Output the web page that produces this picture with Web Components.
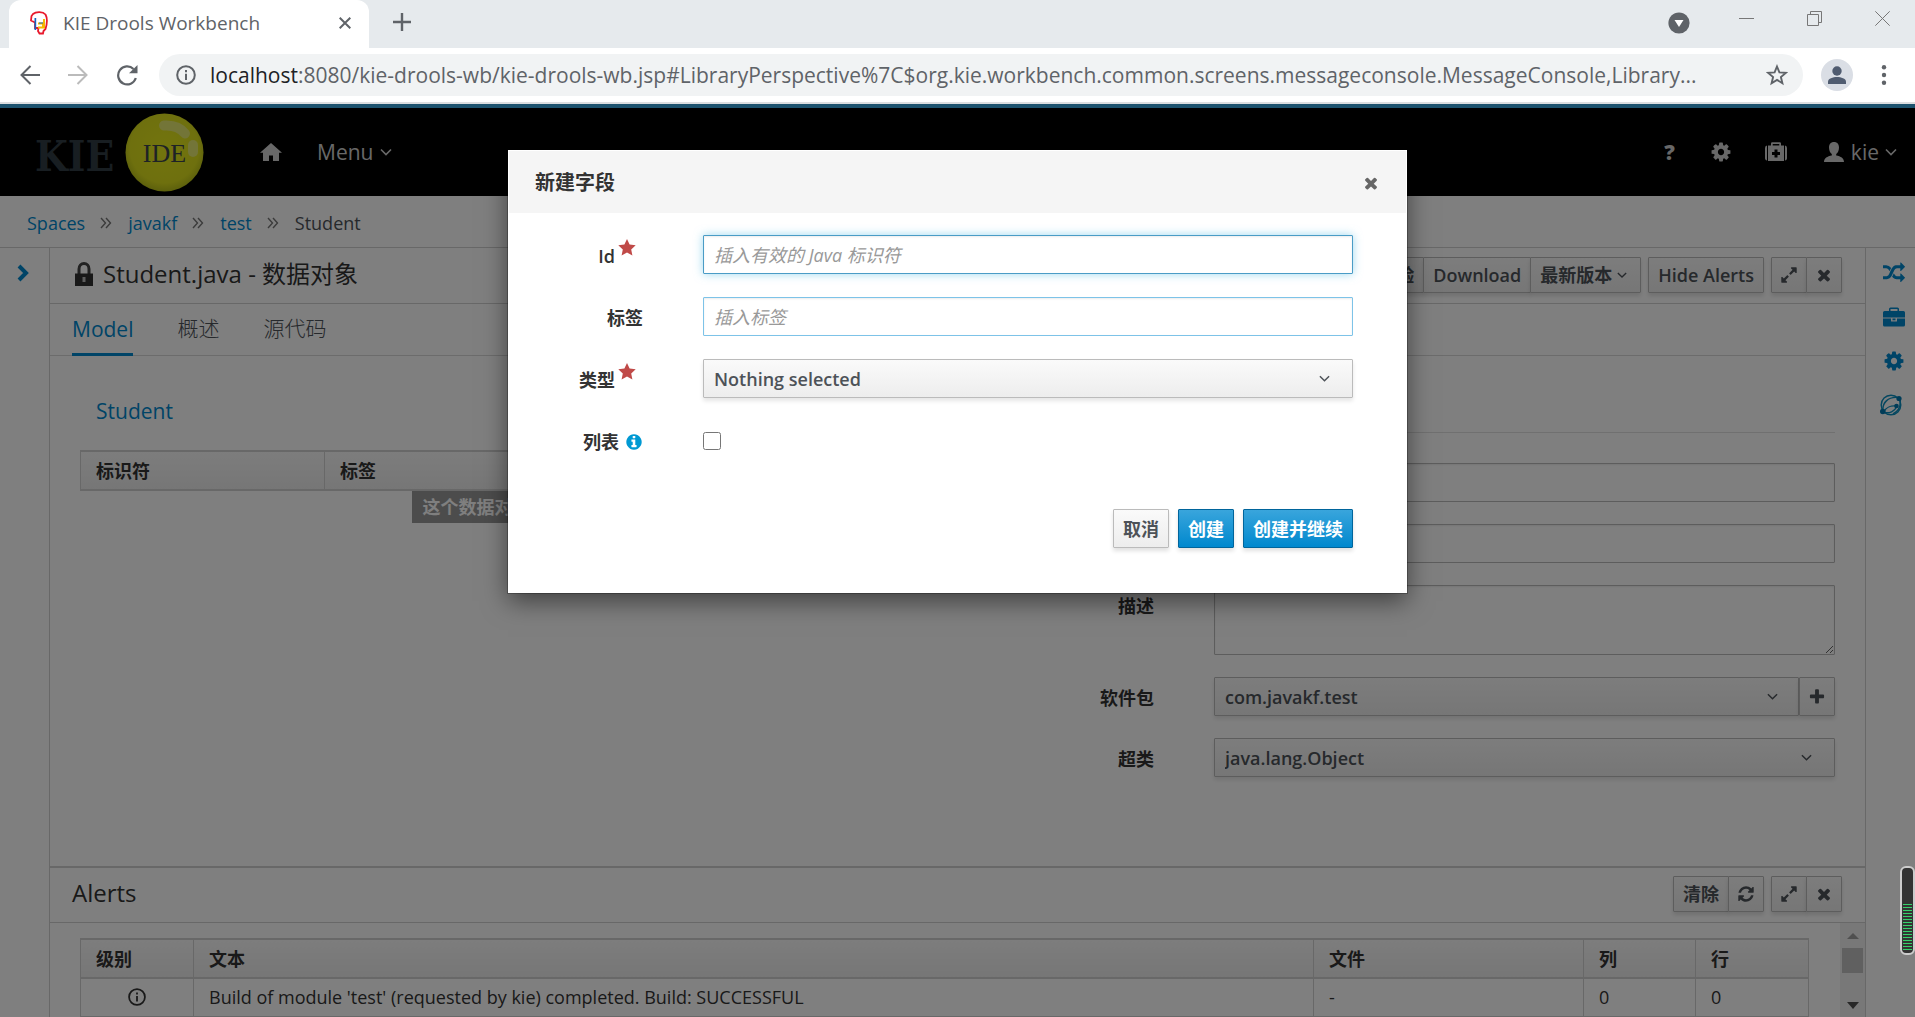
<!DOCTYPE html>
<html lang="zh-CN">
<head>
<meta charset="utf-8">
<title>KIE Drools Workbench</title>
<style>
  html, body { margin: 0; height: 100%; }
  body {
    font-family: "Open Sans", "Noto Sans CJK SC", sans-serif;
    font-size: 18px; line-height: 24px; color: #333; background: #fff; overflow: hidden;
  }
</style>
</head>
<body>
<work-bench></work-bench>

<script>
const BASE = `
  *, *::before, *::after { box-sizing: border-box; }
  [hidden] { display: none; }
  a { color: #0088ce; text-decoration: none; }
  button, input, select, textarea { font: inherit; color: inherit; margin: 0; }
`;

function define(name, render) {
  customElements.define(name, class extends HTMLElement {
    constructor() { super(); this.attachShadow({ mode: 'open' }); }
    connectedCallback() {
      if (this.shadowRoot.childNodes.length) return;
      const t = document.createElement('template');
      t.innerHTML = `<style>${BASE}</style>` + render(this);
      this.shadowRoot.append(t.content.cloneNode(true));
    }
  });
}

const FA = d => ['0 0 1792 1792', `<path fill="currentColor" d="${d}"/>`];
const ICONS = {
  cog: FA('M1152 896q0-106-75-181t-181-75-181 75-75 181 75 181 181 75 181-75 75-181zm512-109v222q0 12-8 23t-20 13l-185 28q-19 54-39 91 35 50 107 138 10 12 10 25t-9 23q-27 37-99 108t-94 71q-12 0-26-9l-138-108q-44 23-91 38-16 136-29 186-7 28-36 28h-222q-14 0-24.5-8.5t-11.5-21.5l-28-184q-49-16-90-37l-141 107q-10 9-25 9-14 0-25-11-126-114-165-168-7-10-7-23 0-12 8-23 15-21 51-66.5t54-70.5q-27-50-41-99l-183-27q-13-2-21-12.5t-8-23.5v-222q0-12 8-23t19-13l186-28q14-46 39-92-40-57-107-138-10-12-10-24 0-10 9-23 26-36 98.5-107.5t94.5-71.5q13 0 26 10l138 107q44-23 91-38 16-136 29-186 7-28 36-28h222q14 0 24.5 8.5t11.5 21.5l28 184q49 16 90 37l142-107q9-9 24-9 13 0 25 10 129 119 165 170 7 8 7 22 0 12-8 23-15 21-51 66.5t-54 70.5q26 50 41 98l183 28q13 2 21 12.5t8 23.5z'),
  times: FA('M1490 1322q0 40-28 68l-136 136q-28 28-68 28t-68-28l-294-294-294 294q-28 28-68 28t-68-28l-136-136q-28-28-28-68t28-68l294-294-294-294q-28-28-28-68t28-68l136-136q28-28 68-28t68 28l294 294 294-294q28-28 68-28t68 28l136 136q28 28 28 68t-28 68l-294 294 294 294q28 28 28 68z'),
  plus: FA('M1600 736v192q0 40-28 68t-68 28h-416v416q0 40-28 68t-68 28h-192q-40 0-68-28t-28-68v-416h-416q-40 0-68-28t-28-68v-192q0-40 28-68t68-28h416v-416q0-40 28-68t68-28h192q40 0 68 28t28 68v416h416q40 0 68 28t28 68z'),
  info: FA('M1152 1376v-160q0-14-9-23t-23-9h-96v-512q0-14-9-23t-23-9h-320q-14 0-23 9t-9 23v160q0 14 9 23t23 9h96v320h-96q-14 0-23 9t-9 23v160q0 14 9 23t23 9h448q14 0 23-9t9-23zm-128-896v-160q0-14-9-23t-23-9h-192q-14 0-23 9t-9 23v160q0 14 9 23t23 9h192q14 0 23-9t9-23zm640 416q0 209-103 385.5t-279.5 279.5-385.5 103-385.5-103-279.5-279.5-103-385.5 103-385.5 279.5-279.5 385.5-103 385.5 103 279.5 279.5 103 385.5z'),
  refresh: FA('M1639 1056q0 5-1 7-64 268-268 434.5t-478 166.5q-146 0-282.5-55t-243.5-157l-129 129q-19 19-45 19t-45-19-19-45v-448q0-26 19-45t45-19h448q26 0 45 19t19 45-19 45l-137 137q71 66 161 102t187 36q134 0 250-65t186-179q11-17 53-117 8-23 30-23h192q13 0 22.5 9.5t9.5 22.5zm25-800v448q0 26-19 45t-45 19h-448q-26 0-45-19t-19-45 19-45l138-138q-148-137-349-137-134 0-250 65t-186 179q-11 17-53 117-8 23-30 23h-199q-13 0-22.5-9.5t-9.5-22.5v-7q65-268 270-434.5t480-166.5q146 0 284 55.5t245 156.5l130-129q19-19 45-19t45 19 19 45z'),
  random: FA('M666 481q-60 92-137 273-22-45-37-72.5t-40.5-63.5-51-56.5-63-35-81.5-14.5h-224q-14 0-23-9t-9-23v-192q0-14 9-23t23-9h224q250 0 410 225zm1126 799q0 14-9 23l-320 320q-9 9-23 9-13 0-22.5-9.5t-9.5-22.5v-192q-32 0-85 .5t-81 1-73-1-71-5-64-10.5-63-18.5-58-28.5-59-40-55-53.5-56-69.5q59-93 136-273 22 45 37 72.5t40.5 63.5 51 56.5 63 35 81.5 14.5h256v-192q0-14 9-23t23-9q12 0 24 10l319 319q9 9 9 23zm0-896q0 14-9 23l-320 320q-9 9-23 9-13 0-22.5-9.5t-9.5-22.5v-192h-256q-48 0-87 15t-69 45-51 61.5-45 77.5q-32 62-78 171-29 66-49.5 111t-54 105-64 100-74 83-90 68.5-106.5 42-128 16.5h-224q-14 0-23-9t-9-23v-192q0-14 9-23t23-9h224q48 0 87-15t69-45 51-61.5 45-77.5q32-62 78-171 29-66 49.5-111t54-105 64-100 74-83 90-68.5 106.5-42 128-16.5h256v-192q0-14 9-23t23-9q12 0 24 10l319 319q9 9 9 23z'),
  expand: FA('M883 1056q0 13-10 23l-332 332 144 144q19 19 19 45t-19 45-45 19h-448q-26 0-45-19t-19-45v-448q0-26 19-45t45-19 45 19l144 144 332-332q10-10 23-10t23 10l114 114q10 10 10 23zm781-864v448q0 26-19 45t-45 19-45-19l-144-144-332 332q-10 10-23 10t-23-10l-114-114q-10-10-10-23t10-23l332-332-144-144q-19-19-19-45t19-45 45-19h448q26 0 45 19t19 45z'),
  briefcase: ['0 0 22 20', `<path fill="currentColor" fill-rule="evenodd" d="M6 4V2a1.500 1.500 0 0 1 1.500-1.500h7A1.500 1.500 0 0 1 16 2v2h4.500A1.500 1.500 0 0 1 22 5.500V10.500H0V5.500A1.500 1.500 0 0 1 1.500 4zM7.500 4h7V2h-7zM0 11.500h8V14a.6.6 0 0 0 .6.6h4.800A.6.6 0 0 0 14 14v-2.500h8v6.500a1.500 1.500 0 0 1-1.500 1.500h-19A1.500 1.500 0 0 1 0 18zM9.500 11.500h3v1.700h-3z"/>`],
  medkit: ['0 0 22 20', `<path fill="currentColor" fill-rule="evenodd" d="M0 6a2.500 2.500 0 0 1 2-2.400v15A2.500 2.500 0 0 1 0 16.500zM3 3.500H6V1.500A1.300 1.300 0 0 1 7.300.2h7.400A1.300 1.300 0 0 1 16 1.500v2h3v15.500H3zM7.700 3.500h6.600V1.900H7.700zM9.500 7.500V10H7v3h2.500v2.500h3V13H15v-3h-2.500V7.500zM20 3.600A2.500 2.500 0 0 1 22 6v10.500a2.500 2.500 0 0 1-2 2.100z"/>`],
  globe: ['0 0 22 22', `<g fill="none" stroke="#0a8fc0" stroke-width="1.400"><circle cx="11" cy="11" r="9.800"/><path d="M3 17C2 9 8 2.500 18 3.500M4 17.500c2-4 7-6 12-5.500M4.500 18.500c5 1 10-1 12-5.500M20 5c1 6-1 12-7 15"/></g><g fill="#0078b0"><circle cx="19" cy="4.500" r="2.600"/><circle cx="2.800" cy="17.500" r="2.800"/><circle cx="16.500" cy="12" r="2.300"/></g>`],
  home: ['0 0 22 18', `<path fill="currentColor" d="M11 0 22 9.800H19V18H13V12.500H9V18H3V9.800H0z"/>`],
  user: ['0 0 20 20', `<path fill="currentColor" d="M10 0c3.200 0 5 2.200 5 5.500 0 2.900-1.200 5.400-2.800 6.600v1.400c4.500.8 7.800 2.700 7.800 6.500H0c0-3.800 3.300-5.700 7.800-6.500v-1.400C6.200 10.900 5 8.400 5 5.500 5 2.200 6.800 0 10 0z"/>`],
  down: ['0 0 12 12', `<path fill="none" stroke="currentColor" stroke-width="1.600" d="M1 3.500 6 8.500 11 3.500"/>`],
  right: ['0 0 12 18', `<path fill="none" stroke="currentColor" stroke-width="4" d="M2 2 9 9 2 16"/>`],
  dbl: ['0 0 12 12', `<path fill="none" stroke="currentColor" stroke-width="1.400" d="M1 1 5.500 6 1 11M6 1 10.500 6 6 11"/>`],
  star: ['0 0 18 17', `<path fill="currentColor" d="M9 0 11.600 5.600 17.700 6.300 13.200 10.400 14.400 16.500 9 13.500 3.600 16.500 4.800 10.400.3 6.300 6.400 5.600z"/>`],
  lock: ['0 0 18 24', `<path fill="none" stroke="#444" stroke-width="3" d="M4 12V7a5 5.500 0 0 1 10 0v5"/><path fill="#333" d="M0 11.500h18V24H0z"/><path fill="#bbb" d="M7.500 15h3v5h-3z"/>`],
  circleinfo: ['0 0 20 20', `<circle cx="10" cy="10" r="8.800" fill="none" stroke="currentColor" stroke-width="2"/><path fill="currentColor" d="M9 5h2v2.200H9zM9 8.800h2V15H9z"/>`],
  favicon: ['0 0 18 24', `<path fill="#fff" stroke="#e8192c" stroke-width="1.800" d="M3 3C6 .5 13 .5 15.500 3.500 18 8 17 13 15.500 18L13.500 20 13 22.500H9.500L8 20 8.500 17H5V11.500L1 9.500 1.500 5z"/><path fill="#1565c0" d="M4.500 7h1.700v12H4.500z"/><path fill="#f5b800" d="M8 11.500h5V8h2v9.500H8v-2h4v-2H8z"/><path fill="#1565c0" d="M9 11.500h4v1H9z"/>`],
  tabclose: ['0 0 12 12', `<path stroke="currentColor" stroke-width="2" d="M.7.7 11.300 11.300M11.300.7.7 11.300"/>`],
  newtab: ['0 0 18 18', `<path stroke="currentColor" stroke-width="2.400" d="M9 0V18M0 9H18"/>`],
  back: ['0 0 20 20', `<path fill="none" stroke="currentColor" stroke-width="2" d="M20 10H2M10.500 1 1.500 10 10.500 19"/>`],
  forward: ['0 0 20 20', `<path fill="none" stroke="currentColor" stroke-width="2" d="M0 10H18M9.500 1 18.500 10 9.500 19"/>`],
  reload: ['0 0 22 22', `<path fill="none" stroke="currentColor" stroke-width="2.200" d="M19.800 14A9 9 0 1 1 17.500 5"/><path fill="currentColor" d="M21.500 1V9.300H13z"/>`],
  bookmark: ['0 0 22 22', `<path fill="none" stroke="currentColor" stroke-width="1.900" stroke-linejoin="miter" d="M11 2.500 13.400 8.400 19.800 8.900 14.900 13 16.400 19.200 11 15.900 5.600 19.200 7.100 13 2.200 8.900 8.600 8.400z"/>`],
  avatar: ['0 0 32 32', `<circle cx="16" cy="16" r="16" fill="#dadee5"/><circle cx="16" cy="12" r="4.700" fill="#505c70"/><path fill="#505c70" d="M7 25v-2.500C7 19.500 12 18 16 18s9 1.500 9 4.500V25z"/>`],
  dots: ['0 0 6 20', `<g fill="currentColor"><circle cx="3" cy="2.300" r="2.200"/><circle cx="3" cy="10" r="2.200"/><circle cx="3" cy="17.700" r="2.200"/></g>`],
  media: ['0 0 22 22', `<circle cx="11" cy="11" r="10.600" fill="#5f6368"/><path fill="#fff" d="M6.500 8h9L11 15z"/>`],
  min: ['0 0 15 15', `<path stroke="#777" stroke-width="1" d="M0 7.500H15"/>`],
  restore: ['0 0 15 15', `<path fill="none" stroke="#777" stroke-width="1" d="M.5 3.500h11v11H.5zM3.500 3.500V.5h11v11h-3"/>`],
  close: ['0 0 15 15', `<path stroke="#777" stroke-width="1" d="M.3.3 14.700 14.700M14.700.3.3 14.700"/>`],
};

define('wb-icon', el => {
  const [box, body] = ICONS[el.getAttribute('name')];
  const [, , w, h] = box.split(' ').map(Number);
  const width = Number(el.getAttribute('size')) || w;
  return `<style>:host { display: inline-flex; flex: none; } svg { display: block; }</style>
    <svg width="${width}" height="${Math.round(width * h / w)}" viewBox="${box}" aria-hidden="true">${body}</svg>`;
});

define('browser-chrome', () => `
  <style>
    :host { display: block; color: #5f6368; font-family: "Open Sans", sans-serif; }
    button { border: 0; background: none; padding: 0; display: inline-flex; }
    .strip { display: flex; align-items: center; height: 48px; background: #e6eaed; padding-left: 9px; }
    .tab { display: flex; align-items: center; width: 360px; height: 48px; padding: 0 18px 2px 21px; gap: 15px;
      background: #fff; border-radius: 12px 12px 0 0; }
    .tab .title { flex: 1; font-size: 19px; }
    .strip > .new { margin: 0 auto 4px 24px; }
    .win { display: flex; align-items: flex-start; gap: 53px; padding-right: 25px; padding-bottom: 11px; }
    .media { margin: 0 49px 3px 0; }
    .bar { display: flex; align-items: center; height: 54px; background: #fff; padding: 0 28px 0 20px; }
    .nav { display: flex; align-items: center; gap: 28px; margin-right: 21px; }
    .fwd { color: #bbb; }
    .omni { flex: 1; min-width: 0; display: flex; align-items: center; height: 42px; border-radius: 21px;
      background: #f1f3f4; padding: 0 15px 0 17px; }
    .url { flex: 1; min-width: 0; margin: 0 32px 0 14px; font-size: 21px; line-height: 28px; white-space: nowrap; overflow: hidden; }
    .url b { font-weight: 400; color: #202124; }
    .me { margin: 0 28px 0 18px; }
    .edge { height: 2px; background: #dcdee0; }
  </style>
  <div class="strip">
    <div class="tab"><wb-icon name="favicon"></wb-icon><span class="title">KIE Drools Workbench</span>
      <button aria-label="Close tab"><wb-icon name="tabclose"></wb-icon></button></div>
    <button class="new" aria-label="New tab"><wb-icon name="newtab"></wb-icon></button>
    <button class="media" aria-label="Media"><wb-icon name="media"></wb-icon></button>
    <div class="win">
      <button aria-label="Minimize"><wb-icon name="min"></wb-icon></button>
      <button aria-label="Restore"><wb-icon name="restore"></wb-icon></button>
      <button aria-label="Close"><wb-icon name="close"></wb-icon></button>
    </div>
  </div>
  <div class="bar">
    <div class="nav">
      <button aria-label="Back"><wb-icon name="back"></wb-icon></button>
      <button class="fwd" aria-label="Forward"><wb-icon name="forward"></wb-icon></button>
      <button aria-label="Reload"><wb-icon name="reload"></wb-icon></button>
    </div>
    <div class="omni">
      <wb-icon name="circleinfo"></wb-icon>
      <div class="url" role="textbox" aria-label="Address"><b>localhost</b>:8080/kie-drools-wb/kie-drools-wb.jsp#LibraryPerspective%7C$org.kie.workbench.common.screens.messageconsole.MessageConsole,Library...</div>
      <button aria-label="Bookmark"><wb-icon name="bookmark"></wb-icon></button>
    </div>
    <button class="me" aria-label="Profile"><wb-icon name="avatar"></wb-icon></button>
    <button aria-label="Menu"><wb-icon name="dots"></wb-icon></button>
  </div>
  <div class="edge"></div>`);

define('app-header', () => `
  <style>
    :host { display: flex; align-items: center; height: 92px; border-top: 4px solid #39a5dc; background: #000;
      padding: 0 18px 0 34px; color: #d1d1d1; font-size: 21px; line-height: 28px; }
    svg.logo { display: block; flex: none; margin-right: 55px; }
    a, button { display: inline-flex; align-items: center; gap: 6px; color: inherit; background: none; border: 0; padding: 0; }
    .menu { margin: 0 auto 0 35px; gap: 7px; }
    .tools { display: flex; align-items: center; }
    .q { font-weight: 800; margin-right: 35px; }
    .gear { margin-right: 33px; }
    .kit { margin-right: 37px; }
    .user wb-icon:first-child { margin-right: 1px; }
  </style>
  <svg class="logo" width="171" height="84" viewBox="0 0 171 84">
    <defs><radialGradient id="ball" cx=".5" cy=".45" r=".55"><stop offset="0" stop-color="#e6ea1c"/><stop offset=".8" stop-color="#dde01c"/><stop offset="1" stop-color="#b9c01a"/></radialGradient></defs>
    <text x="1" y="61" font-family="DejaVu Serif Condensed, DejaVu Serif, serif" font-weight="700" font-size="42" fill="#303d44">KIE</text>
    <circle cx="130.500" cy="42.500" r="39" fill="url(#ball)"/>
    <path d="M130 15.500q14-1 21 8" fill="none" stroke="#e6ea70" stroke-width="10" stroke-linecap="round"/>
    <rect x="154" y="30" width="10" height="17" rx="5" fill="#e6ea70"/>
    <text x="130.500" y="52" text-anchor="middle" font-family="Liberation Serif, serif" font-size="26" fill="#3c444c">IDE</text>
  </svg>
  <a href="#" aria-label="Home"><wb-icon name="home"></wb-icon></a>
  <button class="menu">Menu <wb-icon name="down"></wb-icon></button>
  <div class="tools">
    <button class="q" aria-label="Help">?</button>
    <button class="gear" aria-label="Settings"><wb-icon name="cog" size="22"></wb-icon></button>
    <button class="kit" aria-label="Support"><wb-icon name="medkit"></wb-icon></button>
    <button class="user"><wb-icon name="user"></wb-icon>kie <wb-icon name="down"></wb-icon></button>
  </div>`);

define('bread-crumbs', () => `
  <style>
    :host { display: block; border-bottom: 1px solid #d1d1d1; color: #4d5258; }
    ol { display: flex; align-items: center; gap: 16px; height: 51px; margin: 0; padding: 3px 27px 0; list-style: none; }
    li { display: flex; align-items: center; gap: 15px; }
    wb-icon { color: #777; }
  </style>
  <ol>
    <li><a href="#">Spaces</a><wb-icon name="dbl"></wb-icon></li>
    <li><a href="#">javakf</a><wb-icon name="dbl"></wb-icon></li>
    <li><a href="#">test</a><wb-icon name="dbl"></wb-icon></li>
    <li>Student</li>
  </ol>`);

define('wb-button', el => `
  <style>
    :host { display: inline-flex; margin-left: -1px; }
    button { display: inline-flex; align-items: center; justify-content: center; gap: 5px; height: 36px; padding: 0 9px;
      min-width: 36px; border: 1px solid #bbb; border-radius: 1px; background: linear-gradient(#fafafa, #ededed);
      color: #4d5258; font-weight: 600; white-space: nowrap; box-shadow: 0 3px 4px rgba(3,3,3,.12); }
    :host([icon]) button { padding: 0 8px; }
    :host([tall]) button { height: 39px; }
    :host([tall]) { margin-left: 0; }
    :host([primary]) button { color: #fff; border-color: #00659c; background: linear-gradient(#39a5dc, #0088ce); }
    :host([caret]) button { padding-right: 13px; }
  </style>
  <button type="button" aria-label="${el.getAttribute('label') || el.textContent}"><slot></slot></button>`);

define('panel-title', () => `
  <style>
    :host { display: flex; align-items: center; height: 56px; padding: 0 23px 2px 22px; border-bottom: 1px solid #d1d1d1; }
    h2 { display: flex; align-items: center; gap: 10px; flex: 1; margin: 0; font-size: 24px; line-height: 32px; font-weight: 400; padding-bottom: 2px; }
    .tools { display: flex; gap: 7px; }
  </style>
  <h2><slot></slot></h2>
  <div class="tools"><slot name="tools"></slot></div>`);

define('tool-group', () => `
  <style>:host { display: inline-flex; padding-left: 1px; }</style><slot></slot>`);

define('form-field', el => {
  const kind = el.getAttribute('kind');
  const ph = el.getAttribute('placeholder') || '';
  const chevron = '<wb-icon name="down" size="11"></wb-icon>';
  const control = {
    text: `<input id="c" type="text" placeholder="${ph}">`,
    area: `<textarea id="c"></textarea>`,
    select: `<span class="sel"><select id="c"><option>${el.getAttribute('value')}</option></select>${chevron}</span>`,
    check: `<input id="c" type="checkbox">`,
  }[kind];
  const mark = el.hasAttribute('required') ? '<wb-icon class="star" name="star"></wb-icon>'
    : el.hasAttribute('hint') ? '<wb-icon class="hint" name="info" size="18"></wb-icon>' : '';
  return `
  <style>
    :host { display: grid; grid-template-columns: var(--label, 108px) minmax(0, 1fr); column-gap: 60px; }
    label { display: flex; justify-content: flex-end; align-items: center; height: 39px; padding-top: 2px; font-weight: 600; }
    .star { color: #c04a48; margin: 0 7px 16px 3px; }
    .hint { color: #0099d3; margin-left: 6px; }
    .ctl { display: flex; align-items: center; min-width: 0; min-height: 39px; }
    input[type=text], textarea, select { display: block; flex: 1; width: 100%; height: 39px; padding: 0 10px; border: 1px solid #bbb;
      border-radius: 1px; background: #fff; outline: 0; box-shadow: inset 0 1px 2px rgba(3,3,3,.08); }
    textarea { height: 70px; }
    :host([tone=info]) input[type=text] { border-color: #7dc3e8; }
    :host([tone=focus]) input[type=text] { border-color: #4a9cc6; box-shadow: inset 0 1px 2px rgba(3,3,3,.08), 0 0 10px rgba(92,190,230,.6); }
    ::placeholder { color: #999; opacity: 1; font-style: italic; }
    .sel { display: grid; flex: 1; min-width: 0; align-items: center; }
    .sel > * { grid-area: 1 / 1; }
    .sel select { appearance: none; background: linear-gradient(#fafafa, #ededed); color: #4d5258; font-weight: 600;
      box-shadow: 0 3px 4px rgba(3,3,3,.1); }
    .sel wb-icon { justify-self: end; margin-right: 23px; pointer-events: none; color: #4d5258; }
    :host([joined]) .sel wb-icon { margin-right: 21px; }
    input[type=checkbox] { width: 18px; height: 18px; }
  </style>
  <label for="c">${el.getAttribute('label')}${mark}</label>
  <div class="ctl">${control}<slot></slot></div>`;
});

define('data-editor', () => `
  <style>
    :host { display: flex; flex-direction: column; min-height: 0; }
    nav { display: flex; gap: 44px; height: 52px; padding: 0 22px; border-bottom: 1px solid #d8d8d8; font-size: 21px; line-height: 28px; }
    nav a { display: flex; align-items: center; color: #4d5258; padding: 0 0 3px; font-weight: 300; }
    nav a.on { color: #0088ce; font-weight: 400; border-bottom: 3px solid #0088ce; padding: 0; margin-bottom: -1px; }
    .lock { margin-left: 3px; }
    .body { flex: 1; min-height: 0; display: grid; grid-template-columns: minmax(0, 1fr) minmax(0, 812px); gap: 30px; padding: 0 30px; overflow: hidden; }
    h3 { margin: 0; padding: 41px 16px 25px; font-size: 21px; line-height: 28px; font-weight: 400; color: #0088ce; }
    table { width: 100%; border-collapse: separate; border-spacing: 0; table-layout: fixed; border: 1px solid #d1d1d1; border-width: 2px 1px; }
    th { height: 37px; padding: 0 15px; text-align: left; font-weight: 700; background: linear-gradient(#fafafa, #ededed); border-left: 1px solid #d1d1d1; }
    th:first-child { border-left: 0; }
    .empty { display: flex; justify-content: center; }
    .empty span { width: 250px; background: #999; color: #fff; font-weight: 700; padding: 4px 11px; }
    form { display: flex; flex-direction: column; gap: 22px; --label: 131px; }
    .rule { height: 77px; border-bottom: 1px solid #e0e0e0; margin-bottom: 8px; flex: none; }
  </style>
  <panel-title>
    <wb-icon class="lock" name="lock"></wb-icon>Student.java - 数据对象
    <tool-group slot="tools"><wb-button>检验</wb-button><wb-button>Download</wb-button><wb-button caret>最新版本<wb-icon name="down" size="10"></wb-icon></wb-button></tool-group>
    <tool-group slot="tools"><wb-button>Hide Alerts</wb-button></tool-group>
    <tool-group slot="tools"><wb-button icon label="Expand"><wb-icon name="expand" size="18"></wb-icon></wb-button><wb-button icon label="Close"><wb-icon name="times" size="18"></wb-icon></wb-button></tool-group>
  </panel-title>
  <nav><a class="on" href="#">Model</a><a href="#">概述</a><a href="#">源代码</a></nav>
  <div class="body">
    <section>
      <h3>Student</h3>
      <table><colgroup><col style="width:243px"><col></colgroup><thead><tr><th>标识符</th><th>标签</th></tr></thead></table>
      <div class="empty"><span>这个数据对象</span></div>
    </section>
    <form>
      <div class="rule"></div>
      <form-field kind="text" label=""></form-field>
      <form-field kind="text" label=""></form-field>
      <form-field kind="area" label="描述"></form-field>
      <form-field kind="select" label="软件包" value="com.javakf.test" joined><wb-button tall icon label="Add"><wb-icon name="plus" size="18"></wb-icon></wb-button></form-field>
      <form-field kind="select" label="超类" value="java.lang.Object"></form-field>
    </form>
  </div>`);

define('alerts-panel', () => `
  <style>
    :host { display: flex; flex-direction: column; height: 151px; border-top: 2px solid #d1d1d1; overflow: hidden; }
    panel-title { height: 55px; flex: none; }
    .scroll { flex: 1; min-height: 0; display: flex; gap: 31px; overflow: hidden; }
    .wrap { flex: 1; min-width: 0; padding: 15px 0 0 30px; }
    table { width: 100%; table-layout: fixed; border-collapse: collapse; }
    th, td { height: 39px; padding: 0 15px; text-align: left; border: 1px solid #d1d1d1; white-space: nowrap; }
    td { height: 38px; }
    th { font-weight: 700; background: linear-gradient(#fafafa, #ededed); border-width: 2px 1px; }
    td wb-icon { display: flex; justify-content: center; }
    .bar { display: flex; flex-direction: column; align-items: center; width: 25px; background: #f1f1f1; padding: 10px 0 8px; }
    .bar i { width: 21px; height: 25px; background: #c1c1c1; margin: 9px 0 auto; }
    .up, .dn { border: 6px solid transparent; border-top: 0; border-bottom: 6px solid #a0a0a0; }
    .dn { border-top: 7px solid #505050; border-bottom: 0; }
  </style>
  <panel-title>Alerts
    <tool-group slot="tools"><wb-button>清除</wb-button><wb-button icon label="Refresh"><wb-icon name="refresh" size="18"></wb-icon></wb-button></tool-group>
    <tool-group slot="tools"><wb-button icon label="Expand"><wb-icon name="expand" size="18"></wb-icon></wb-button><wb-button icon label="Close"><wb-icon name="times" size="18"></wb-icon></wb-button></tool-group>
  </panel-title>
  <div class="scroll">
    <div class="wrap"><table>
      <colgroup><col style="width:113px"><col><col style="width:270px"><col style="width:112px"><col style="width:113px"></colgroup>
      <thead><tr><th>级别</th><th>文本</th><th>文件</th><th>列</th><th>行</th></tr></thead>
      <tbody><tr><td><wb-icon name="circleinfo" size="18"></wb-icon></td><td>Build of module 'test' (requested by kie) completed. Build: SUCCESSFUL</td><td>-</td><td>0</td><td>0</td></tr></tbody>
    </table></div>
    <div class="bar"><span class="up"></span><i></i><span class="dn"></span></div>
  </div>`);

define('side-dock', el => `
  <style>
    :host { display: flex; flex-direction: column; align-items: center; width: 50px; color: #0088ce; border-right: 1px solid #d1d1d1; }
    :host([side=right]) { border: 0; border-left: 1px solid #d1d1d1; padding-left: 7px; }
    button { display: flex; align-items: center; justify-content: center; width: 34px; height: 44px; padding: 0; border: 0; background: none; color: inherit; }
    .first { margin-top: 3px; }
    :host([side=left]) { padding-right: 4px; }
    .globe { padding-right: 7px; }
  </style>` + (el.getAttribute('side') === 'left'
  ? `<button class="first" aria-label="Open"><wb-icon name="right"></wb-icon></button>`
  : `<button class="first" aria-label="Shuffle"><wb-icon name="random" size="22"></wb-icon></button>
     <button aria-label="Projects"><wb-icon name="briefcase"></wb-icon></button>
     <button aria-label="Settings"><wb-icon name="cog" size="22"></wb-icon></button>
     <button class="globe" aria-label="Services"><wb-icon name="globe"></wb-icon></button>`));

define('field-dialog', () => `
  <style>
    :host { display: block; width: 899px; border: 1px solid #fff; background: #fff; box-shadow: 0 8px 24px rgba(0,0,0,.5), 0 0 0 1px rgba(0,0,0,.25); }
    header { display: flex; align-items: center; justify-content: space-between; height: 62px; padding: 2px 26px 0; background: #f5f5f5; }
    h4 { margin: 0; font-size: 20px; line-height: 28px; font-weight: 700; }
    header button { border: 0; background: none; padding: 0; display: flex; color: #666; }
    form { display: flex; flex-direction: column; gap: 23px; padding: 22px 53px 44px 26px; }
    footer { display: flex; justify-content: flex-end; gap: 9px; margin-top: 26px; }
  </style>
  <header><h4>新建字段</h4><button aria-label="Close"><wb-icon name="times" size="18"></wb-icon></button></header>
  <form>
    <form-field kind="text" tone="focus" label="Id" required placeholder="插入有效的 Java 标识符"></form-field>
    <form-field kind="text" tone="info" label="标签" placeholder="插入标签"></form-field>
    <form-field kind="select" label="类型" required value="Nothing selected"></form-field>
    <form-field kind="check" label="列表" hint></form-field>
    <footer><wb-button tall>取消</wb-button><wb-button tall primary>创建</wb-button><wb-button tall primary>创建并继续</wb-button></footer>
  </form>`);

define('perf-meter', () => `
  <style>
    :host { display: block; box-sizing: border-box; width: 15px; height: 89px; padding: 36px 1px 3px; border: 2px solid #ccc; border-radius: 6px; background: #333; }
    div { height: 100%; background: repeating-linear-gradient(#35d06a 0 1px, #333 1px 3px); }
  </style><div></div>`);

define('work-bench', () => `
  <style>
    :host { display: flex; flex-direction: column; height: 100vh; overflow: hidden; }
    .app { flex: 1; min-height: 0; display: flex; flex-direction: column; position: relative; }
    .main { flex: 1; min-height: 0; display: flex; }
    .center { flex: 1; min-width: 0; display: flex; flex-direction: column; }
    data-editor { flex: 1; }
    .veil { position: absolute; inset: 0; background: rgba(0,0,0,.5); display: flex; justify-content: center; align-items: flex-start; padding-top: 46px; }
    perf-meter { position: absolute; right: 0; bottom: 62px; }
  </style>
  <browser-chrome></browser-chrome>
  <div class="app">
    <app-header></app-header>
    <bread-crumbs></bread-crumbs>
    <div class="main">
      <side-dock side="left"></side-dock>
      <div class="center"><data-editor></data-editor><alerts-panel></alerts-panel></div>
      <side-dock side="right"></side-dock>
    </div>
    <div class="veil"><field-dialog></field-dialog></div>
    <perf-meter></perf-meter>
  </div>`);
</script>
</body>
</html>
